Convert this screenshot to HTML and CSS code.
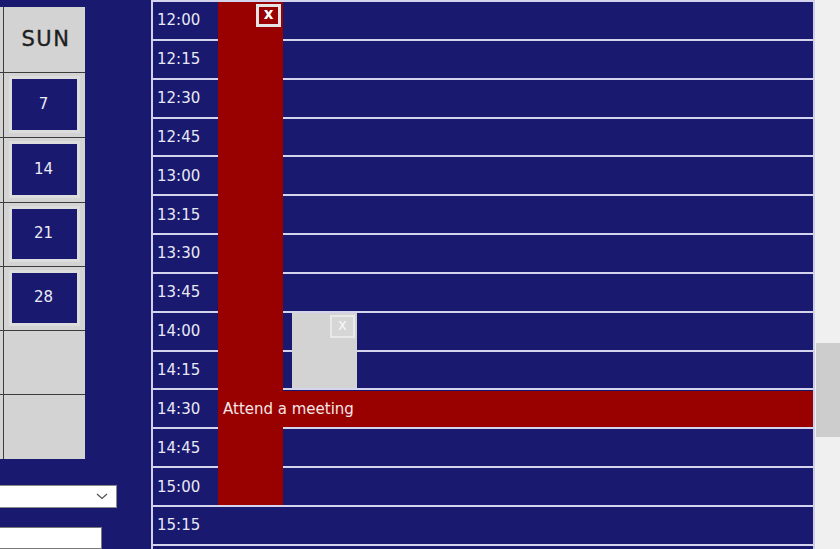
FILE: index.html
```html
<!DOCTYPE html>
<html>
<head>
<meta charset="utf-8">
<link rel="stylesheet" href="styles.css">
</head>
<body>
<div class="app">
  <aside class="left">
    <div class="calendar">
      <div class="cal-row head"><div class="prev"></div><div class="cell head-cell">SUN</div></div>
      <div class="cal-row r65"><div class="prev"></div><div class="cell"><div class="day">7</div></div></div>
      <div class="cal-row r65"><div class="prev"></div><div class="cell"><div class="day">14</div></div></div>
      <div class="cal-row r64"><div class="prev"></div><div class="cell"><div class="day">21</div></div></div>
      <div class="cal-row r64"><div class="prev"></div><div class="cell"><div class="day">28</div></div></div>
      <div class="cal-row r64"><div class="prev"></div><div class="cell"></div></div>
      <div class="cal-row r64 last"><div class="prev"></div><div class="cell"></div></div>
    </div>
    <div class="combo">
      <svg class="chev" width="12" height="7" viewBox="0 0 12 7"><polyline points="1,1 6,5.5 11,1" fill="none" stroke="#555" stroke-width="1.3"/></svg>
    </div>
    <div class="textbox"></div>
  </aside>
  <section class="schedule">
    <div class="slot"><span>12:00</span></div>
    <div class="slot"><span>12:15</span></div>
    <div class="slot"><span>12:30</span></div>
    <div class="slot"><span>12:45</span></div>
    <div class="slot"><span>13:00</span></div>
    <div class="slot"><span>13:15</span></div>
    <div class="slot"><span>13:30</span></div>
    <div class="slot"><span>13:45</span></div>
    <div class="slot"><span>14:00</span></div>
    <div class="slot"><span>14:15</span></div>
    <div class="slot"><span>14:30</span></div>
    <div class="slot"><span>14:45</span></div>
    <div class="slot"><span>15:00</span></div>
    <div class="slot"><span>15:15</span></div>
    <div class="slot"></div>

    <div class="event ev-col"><span class="close close-red">x</span></div>
    <div class="event ev-gray"><span class="close close-gray">x</span></div>
    <div class="event ev-bar">Attend a meeting</div>
  </section>
  <div class="scrollbar"><div class="thumb"></div></div>
</div>
</body>
</html>
```

FILE: styles.css
```css
html, body {
  margin: 0;
  padding: 0;
  background: #191970;
}

.app {
  display: flex;
  width: 840px;
  height: 549px;
  overflow: hidden;
  background: #191970;
  font-family: "DejaVu Sans", sans-serif;
}

/* left side */
.left {
  width: 151px;
  flex: none;
  padding-top: 7px;
  box-sizing: border-box;
  display: flex;
  flex-direction: column;
}

.calendar {
  width: 85px;
  background: #d3d3d3;
}

.cal-row {
  display: flex;
  box-sizing: border-box;
  border-bottom: 1px solid #3c3c3c;
}
.cal-row.head { height: 66px; }
.cal-row.r65 { height: 65px; }
.cal-row.r64 { height: 64px; }
.cal-row.last { border-bottom: none; }

.prev {
  width: 3px;
  flex: none;
  border-right: 1px solid #3c3c3c;
}

.cell {
  flex: 1;
  padding: 3px 5px 4px 5px;
  box-sizing: border-box;
  display: flex;
}

.head-cell {
  align-items: center;
  justify-content: center;
  font-family: "DejaVu Sans", sans-serif;
  font-size: 21px;
  letter-spacing: 1.5px;
  padding-right: 2px;
  color: #1e1e1e;
  -webkit-text-stroke: 0.4px #1e1e1e;
}

.day {
  flex: 1;
  box-sizing: border-box;
  border: 3px solid #dddddd;
  background: #191970;
  color: #ececf4;
  font-size: 15px;
  display: flex;
  align-items: center;
  justify-content: center;
  padding-right: 2px;
  padding-bottom: 2px;
}

.combo {
  margin-top: 26px;
  width: 117px;
  height: 26px;
  box-sizing: border-box;
  background: #ffffff;
  border: 1px solid #8a8a8a;
  border-left: none;
  display: flex;
  align-items: center;
  justify-content: flex-end;
  padding-right: 8px;
}

.textbox {
  margin-top: 19px;
  width: 102px;
  height: 26px;
  box-sizing: border-box;
  background: #ffffff;
  border: 1px solid #7a7a7a;
  border-left: none;
}

/* schedule */
.schedule {
  position: relative;
  width: 664px;
  flex: none;
  box-sizing: border-box;
  border-left: 2px solid #d0d0ea;
  border-right: 2px solid #d0d0ea;
}

.slot {
  height: 38.85px;
  box-sizing: border-box;
  border-top: 2px solid #d4d4ee;
  display: flex;
  align-items: center;
  padding-left: 4px;
  color: #e8e8f2;
  font-size: 15px;
}

.event {
  position: absolute;
  box-sizing: border-box;
}

.ev-col {
  left: 65px;
  top: 2px;
  width: 65px;
  height: 503px;
  background: #990000;
}

.ev-gray {
  left: 139px;
  top: 312.8px;
  width: 65px;
  height: 75.7px;
  background: #d3d3d3;
}

.ev-bar {
  left: 65px;
  right: 0;
  top: 390.5px;
  height: 36.85px;
  background: #990000;
  color: #f4e6e6;
  font-size: 15px;
  display: flex;
  align-items: center;
  padding-left: 5px;
}

.close {
  position: absolute;
  top: 2px;
  right: 2px;
  width: 25px;
  height: 23px;
  box-sizing: border-box;
  display: flex;
  align-items: center;
  justify-content: center;
  font-weight: bold;
  font-size: 15px;
  line-height: 1;
  color: #ffffff;
  padding-bottom: 2px;
}

.close-red {
  background: #990000;
  border: 3px solid #e4e4e4;
}

.close-gray {
  background: #d6d6d6;
  border: 2px solid #e9e9e9;
  color: #f6f6f6;
  font-weight: normal;
}

/* scrollbar */
.scrollbar {
  flex: 1;
  background: #f0f0f0;
  padding-left: 1px;
}

.thumb {
  margin-top: 343px;
  height: 94px;
  background: #cdcdcd;
}
```
